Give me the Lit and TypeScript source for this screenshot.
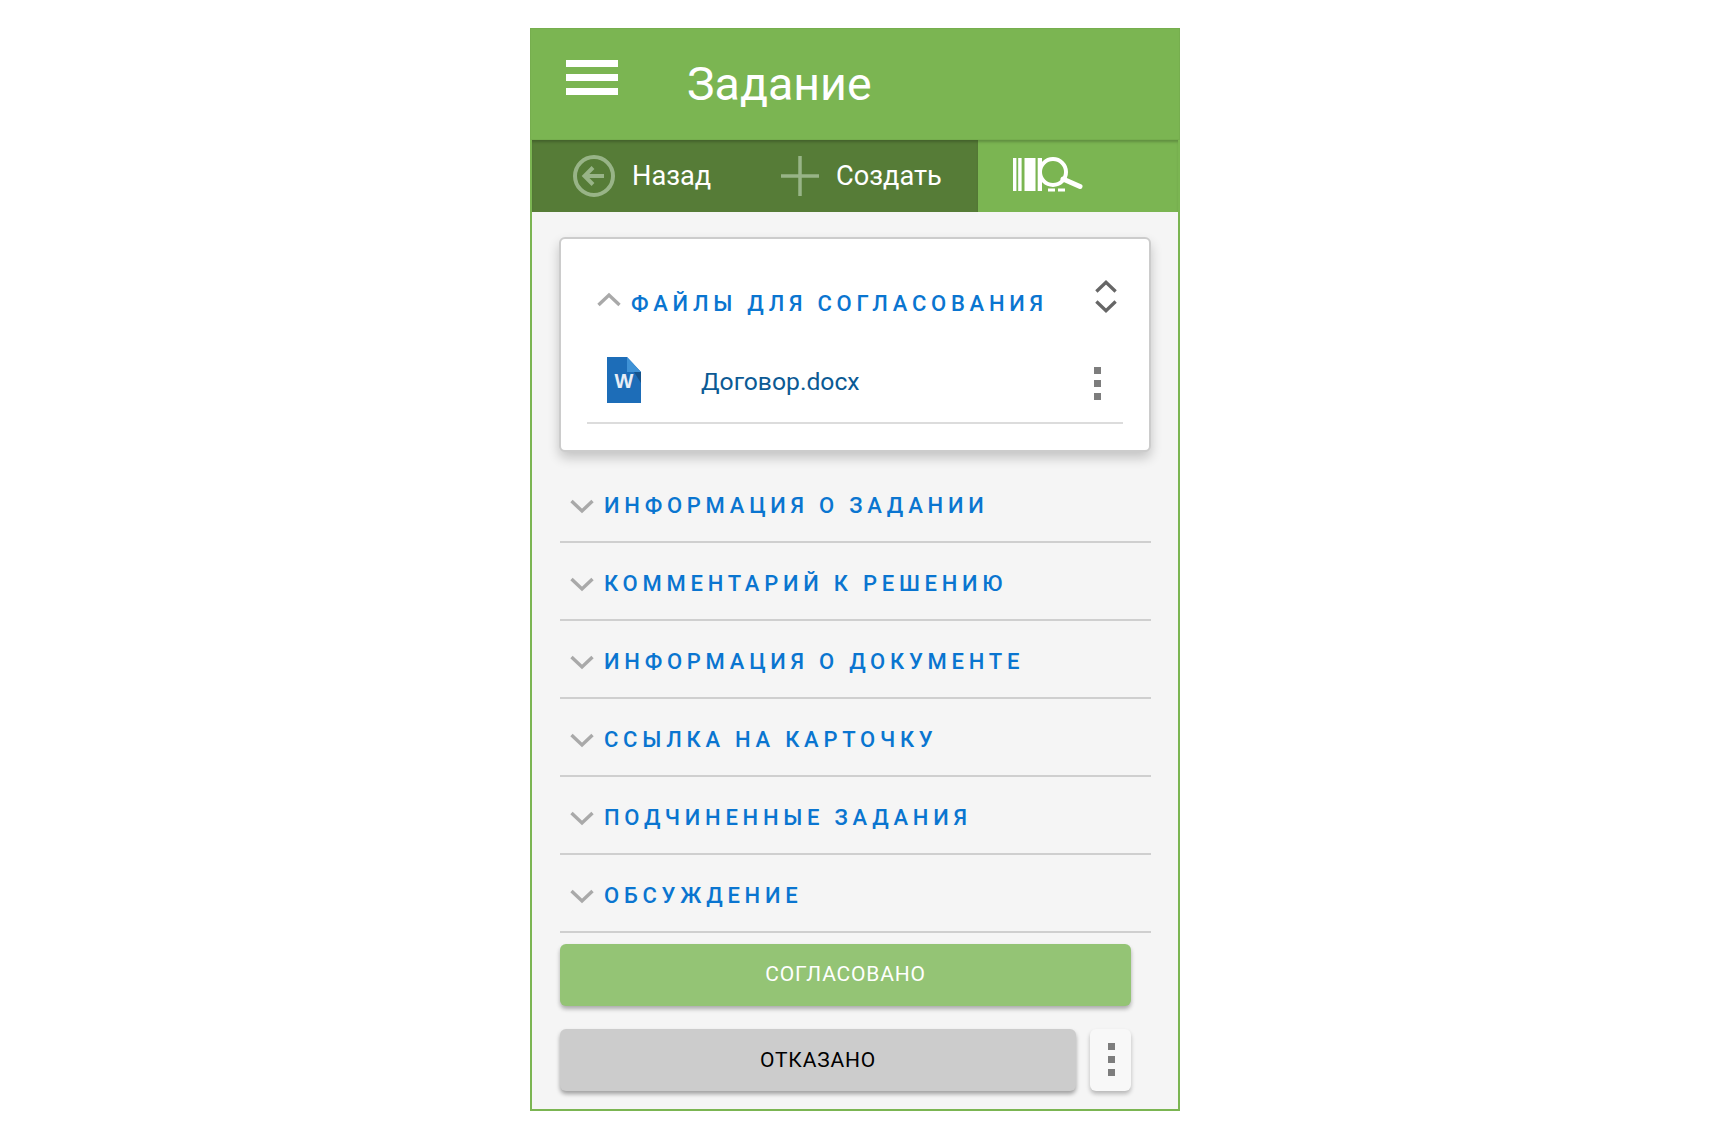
import { LitElement, html, css, svg } from "lit";
import { customElement } from "lit/decorators.js";

const chevron = (up: boolean, color: string, w = 24, sw = 3.4) => html`<svg width=${w} height="15" viewBox="0 0 24 15" fill="none" stroke=${color} stroke-width=${sw}>
  ${up ? svg`<path d="M1.5 13 L12 3 L22.5 13"/>` : svg`<path d="M1.5 2 L12 12 L22.5 2"/>`}
</svg>`;

const kebab = html`<svg width="8" height="34" viewBox="0 0 8 34" fill="#7d7d7d"><rect x="0" y="0" width="7" height="7"/><rect x="0" y="13" width="7" height="7"/><rect x="0" y="26" width="7" height="7"/></svg>`;

const SECTIONS = ["ИНФОРМАЦИЯ О ЗАДАНИИ", "КОММЕНТАРИЙ К РЕШЕНИЮ", "ИНФОРМАЦИЯ О ДОКУМЕНТЕ", "ССЫЛКА НА КАРТОЧКУ", "ПОДЧИНЕННЫЕ ЗАДАНИЯ", "ОБСУЖДЕНИЕ"];

@customElement("app-root")
export class AppRoot extends LitElement {
  static styles = css`
    :host { display: block; font-family: Roboto, "Noto Sans", sans-serif; }
    .frame { box-sizing: border-box; width: 650px; height: 1083px; margin: 28px 0 0 530px; border: 2px solid #7bb552; border-top: 0; background: #f5f5f5; display: flex; flex-direction: column; }
    .header { height: 112px; margin: 0 -2px; background: #7bb552; display: flex; align-items: flex-start; flex: none; box-sizing: border-box; border: 1px solid #76ae4e; }
    .burger { margin: 31px 0 0 35px; width: 52px; display: flex; flex-direction: column; gap: 7px; }
    .burger i { display: block; height: 7px; background: #fff; }
    .title { margin: 26px 0 0 69px; font-size: 46.5px; line-height: 58px; color: #fff; }
    .toolbar { height: 72px; flex: none; display: flex; background: #7bb552; box-shadow: inset 0 3px 3px -1px rgba(0,0,0,.22); }
    .dark { width: 446px; flex: none; background: #567c37; box-shadow: inset 0 3px 3px -1px rgba(0,0,0,.22); display: flex; align-items: center; color: #fff; font-size: 27.2px; }
    .back-ic { margin-left: 41px; }
    .back-tx { margin-left: 17px; width: 149px; }
    .create-tx { margin-left: 17px; }
    .search { margin: 15px 0 0 35px; }
    .content { flex: 1; padding: 25px 27px 0 28px; display: flex; flex-direction: column; }
    .card { height: 215px; flex: none; box-sizing: border-box; border: 2px solid #ccc; border-radius: 6px; background: #fff; box-shadow: 0 6px 12px rgba(0,0,0,.2); padding: 0 26px; display: flex; flex-direction: column; margin: 0 0 13px -1px; }
    .card-head { display: flex; align-items: center; height: 116px; padding-left: 10px; box-sizing: border-box; padding-top: 12px; }
    .card-head .ch { margin-right: 10px; margin-top: -8px; display: flex; }
    .sec { color: #0a75d0; font-size: 22px; font-weight: 500; letter-spacing: 4.75px; white-space: nowrap; }
    .updown { margin-left: auto; margin-right: 6px; display: flex; flex-direction: column; gap: 5px; margin-top: -14px; }
    .file { display: flex; align-items: center; height: 57px; margin-top: -2px; border-bottom: 2px solid #dcdcdc; padding-bottom: 12px; padding-left: 20px; }
    .fname { margin-left: 60px; font-size: 24.7px; color: #0b5a94; }
    .file svg.doc { margin-top: -4px; }
    .fkeb { margin-left: auto; margin-right: 21px; display: flex; margin-top: 4px; }
    .row { height: 78px; box-sizing: border-box; border-bottom: 2px solid #cfcfcf; display: flex; align-items: center; padding-left: 10px; padding-top: 5px; flex: none; }
    .row .ch { margin-right: 10px; margin-top: 1px; display: flex; }
    .btn { border-radius: 6px; display: flex; align-items: center; justify-content: center; font-size: 21px; letter-spacing: .8px; flex: none; box-sizing: border-box; }
    .agree { width: 571px; height: 62px; padding-bottom: 2px; margin-top: 11px; background: #94c475; color: #fff; box-shadow: 0 3px 4px rgba(0,0,0,.3); }
    .bottom { display: flex; gap: 14px; margin-top: 23px; width: 571px; }
    .deny { width: 516px; height: 62px; padding-bottom: 1px; background: #cccccc; color: #000; box-shadow: 0 3px 4px rgba(0,0,0,.35); }
    .more { width: 41px; height: 62px; padding-left: 2px; background: #f8f8f8; box-shadow: 0 3px 4px rgba(0,0,0,.25); }
  `;

  render() {
    return html`<div class="frame">
      <div class="header">
        <div class="burger"><i></i><i></i><i></i></div>
        <div class="title">Задание</div>
      </div>
      <div class="toolbar">
        <div class="dark">
          <svg class="back-ic" width="42" height="44" viewBox="0 0 42 44" fill="none" stroke="#98b487" stroke-width="4">
            <circle cx="21" cy="22" r="19"/>
            <path d="M31 22 H12 M20 13.5 L11.5 22 L20 30.5"/>
          </svg>
          <span class="back-tx">Назад</span>
          <svg width="38" height="40" viewBox="0 0 38 40" stroke="#98b487" stroke-width="3.5" fill="none"><path d="M0 20 H38 M19 0 V40"/></svg>
          <span class="create-tx">Создать</span>
        </div>
        <svg class="search" width="72" height="40" viewBox="0 0 72 40" fill="#fff">
          <rect x="0" y="3" width="3.4" height="33"/><rect x="5.2" y="3" width="3.4" height="33"/><rect x="11.5" y="3" width="11" height="33"/><rect x="24.7" y="3" width="4.3" height="33"/>
          <rect x="35" y="33.5" width="7" height="3"/><rect x="45" y="33.5" width="7" height="3"/>
          <circle cx="40" cy="17" r="13" fill="#7bb552" stroke="#fff" stroke-width="4"/>
          <path d="M50 24 L67 31.5" stroke="#fff" stroke-width="5" stroke-linecap="round"/>
        </svg>
      </div>
      <div class="content">
        <div class="card">
          <div class="card-head">
            <span class="ch">${chevron(true, "#a9a9a9")}</span>
            <span class="sec">ФАЙЛЫ ДЛЯ СОГЛАСОВАНИЯ</span>
            <div class="updown">
              ${chevron(true, "#666", 22, 3.6)}
              ${chevron(false, "#666", 22, 3.6)}
            </div>
          </div>
          <div class="file">
            <svg class="doc" width="34" height="46" viewBox="0 0 34 46">
              <path d="M0 0 H20 L34 15 V46 H0 Z" fill="#1d6db8"/>
              <path d="M20 0 L34 15 H20 Z" fill="#3f92d6"/>
              <path d="M27 15 H34 V26 Z" fill="#15538c"/>
              <text x="17" y="31" font-family="Liberation Sans, sans-serif" font-weight="700" font-size="20" fill="#e8eef6" text-anchor="middle">W</text>
            </svg>
            <span class="fname">Договор.docx</span>
            <span class="fkeb">${kebab}</span>
          </div>
        </div>
        ${SECTIONS.map((s) => html`<div class="row"><span class="ch">${chevron(false, "#a9a9a9")}</span><span class="sec">${s}</span></div>`)}
        <div class="btn agree">СОГЛАСОВАНО</div>
        <div class="bottom">
          <div class="btn deny">ОТКАЗАНО</div>
          <div class="btn more">${kebab}</div>
        </div>
      </div>
    </div>`;
  }
}
